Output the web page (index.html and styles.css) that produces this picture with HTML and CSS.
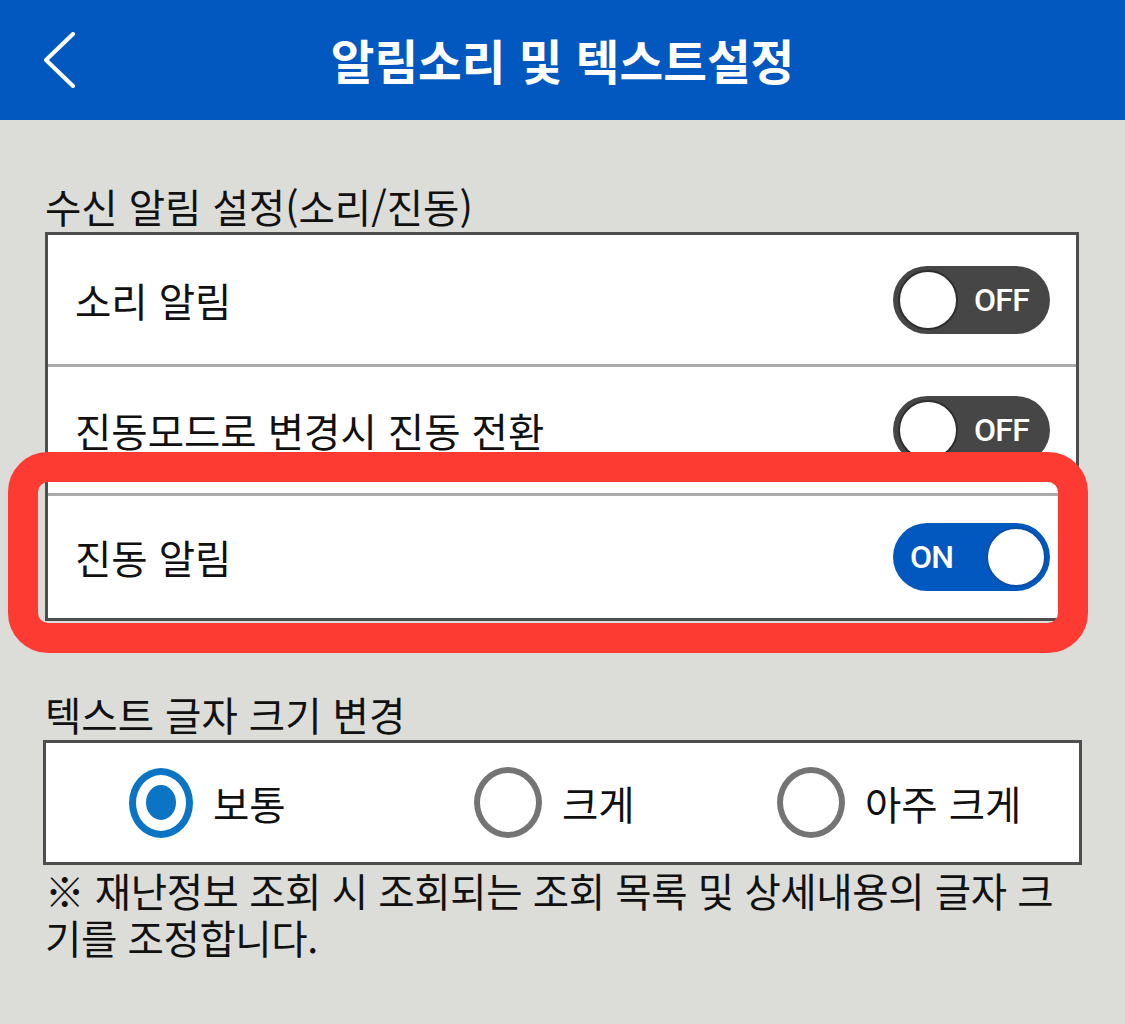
FILE: index.html
```html
<!DOCTYPE html>
<html lang="ko">
<head>
<meta charset="utf-8">
<title>알림소리 및 텍스트설정</title>
<link rel="stylesheet" href="styles.css">
</head>
<body>
<header class="appbar">
  <div class="appbar-left">
    <svg class="back" width="32" height="56" viewBox="0 0 32 56" aria-hidden="true">
      <polyline points="29,2 2,28 29,54" fill="none" stroke="#ffffff" stroke-width="4" stroke-linecap="round" stroke-linejoin="round"/>
    </svg>
  </div>
  <h1 class="title">알림소리 및 텍스트설정</h1>
  <div class="appbar-right"></div>
</header>
<main class="content">
  <h2 class="section-label label-alert">수신 알림 설정(소리/진동)</h2>
  <div class="setting-box">
    <div class="row row-1">
      <span class="row-text">소리 알림</span>
      <span class="toggle off"><span class="knob"></span><span class="tlabel">OFF</span></span>
    </div>
    <div class="row row-2">
      <span class="row-text">진동모드로 변경시 진동 전환</span>
      <span class="toggle off"><span class="knob"></span><span class="tlabel">OFF</span></span>
    </div>
    <div class="row row-3">
      <span class="row-text">진동 알림</span>
      <span class="toggle on"><span class="tlabel">ON</span><span class="knob"></span></span>
    </div>
  </div>

  <h2 class="section-label label-size">텍스트 글자 크기 변경</h2>
  <div class="size-box">
    <label class="radio-item"><span class="radio checked"><span class="dot"></span></span><span class="radio-text">보통</span></label>
    <label class="radio-item"><span class="radio"></span><span class="radio-text">크게</span></label>
    <label class="radio-item"><span class="radio"></span><span class="radio-text">아주 크게</span></label>
  </div>
  <p class="note">※ 재난정보 조회 시 조회되는 조회 목록 및 상세내용의 글자 크<br>기를 조정합니다.</p>

  <div class="highlight"></div>
</main>
</body>
</html>
```

FILE: styles.css
```css
* { box-sizing: border-box; }

html, body {
  margin: 0;
  padding: 0;
}

body {
  width: 1125px;
  height: 1024px;
  background: #dcdcd8;
  font-family: "Noto Sans CJK KR", "Noto Sans", sans-serif;
  color: #111111;
  overflow: hidden;
}

.appbar {
  height: 120px;
  background: #0358c0;
  display: grid;
  grid-template-columns: 1fr auto 1fr;
  align-items: center;
}

.appbar-left {
  padding-left: 44px;
  display: flex;
  align-items: center;
}

.back { display: block; }

.title {
  margin: 0;
  color: #ffffff;
  font-size: 47.5px;
  font-weight: 700;
  line-height: 56px;
}

.content {
  position: relative;
  padding-top: 64px;
}

.section-label {
  margin: 0 0 4px 45px;
  font-size: 39.5px;
  font-weight: 400;
  line-height: 44px;
  color: #111111;
}

.label-size {
  margin-top: 71px;
}

.setting-box {
  margin: 0 46px 0 45px;
  border: 3px solid #4e4e4e;
  background: #ffffff;
}

.row {
  display: flex;
  align-items: center;
  justify-content: space-between;
  padding: 0 26px 0 27px;
}

.row-1 { height: 129px; }
.row-2 { height: 129px; border-top: 3px solid #ababab; }
.row-3 { height: 125px; border-top: 3px solid #ababab; }

.row-text {
  font-size: 39.5px;
  line-height: 44px;
}

.toggle {
  width: 157px;
  height: 68px;
  border-radius: 34px;
  display: flex;
  align-items: center;
  justify-content: space-between;
  font-family: Roboto, "Liberation Sans", sans-serif;
  font-size: 32px;
  font-weight: 500;
  color: #ffffff;
}

.toggle.off {
  background: #464646;
  padding: 0 21px 0 5px;
}

.toggle.on {
  background: #0358c0;
  padding: 0 4px 0 17px;
}

.knob {
  width: 60px;
  height: 60px;
  border-radius: 50%;
  background: #ffffff;
}

.toggle.off .knob { border: 2px solid #2e2e2e; }
.toggle.on .knob { border: 2px solid #0a4fa8; }

.tlabel {
  line-height: 1;
  letter-spacing: -0.8px;
}

.size-box {
  margin: 0 43px;
  height: 125px;
  border: 3px solid #4e4e4e;
  background: #ffffff;
  display: grid;
  grid-template-columns: 345px 303px 1fr;
  align-items: center;
  padding-left: 83px;
}

.radio-item {
  display: flex;
  align-items: center;
  gap: 20px;
}

.radio {
  width: 68px;
  height: 71px;
  border-radius: 50%;
  border: 6px solid #747474;
  display: flex;
  align-items: center;
  justify-content: center;
  flex: none;
}

.radio.checked {
  width: 64px;
  height: 70px;
  border: 7px solid #0b74c4;
}

.dot {
  width: 30px;
  height: 35px;
  border-radius: 50%;
  background: #0b74c4;
}

.radio-text {
  font-size: 39.5px;
  line-height: 44px;
}

.note {
  margin: 1px 0 0 45px;
  font-size: 39.5px;
  line-height: 47px;
  letter-spacing: -0.4px;
}

.highlight {
  position: absolute;
  left: 8px;
  top: 332px;
  width: 1080px;
  height: 201px;
  border: 30px solid #fd3b33;
  border-radius: 40px;
  pointer-events: none;
}
```
